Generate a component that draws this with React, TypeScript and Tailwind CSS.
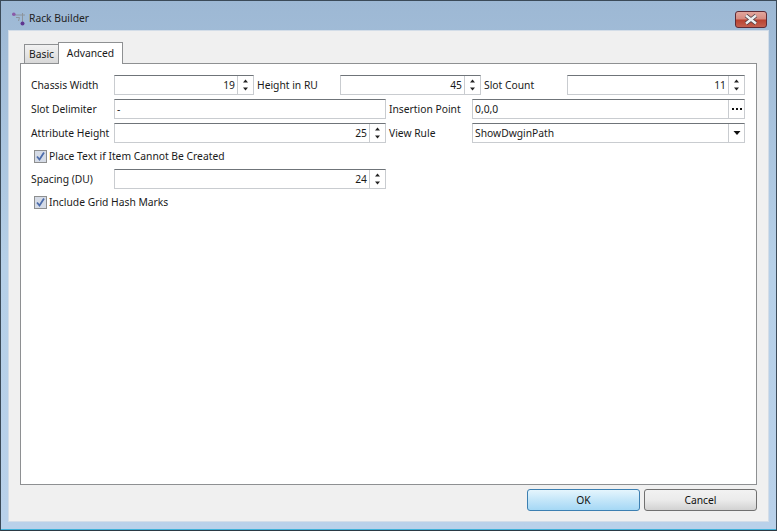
const fieldBorder = 'border border-[#c9ccd0] border-t-[#6f7479] bg-white'

function SpinArrows() {
  return (
    <svg width="7" height="12" viewBox="0 0 7 12">
      <path d="M3.5 0.5L6 3.5H1Z" fill="#222" />
      <path d="M1 8.5H6L3.5 11.5Z" fill="#222" />
    </svg>
  )
}

function Label({ text, className }: { text: string; className: string }) {
  return <div className={`shrink-0 whitespace-nowrap ${className}`}>{text}</div>
}

function Spinner({ value, className }: { value: string; className: string }) {
  return (
    <div className={`flex h-5 items-center ${fieldBorder} ${className}`}>
      <div className="flex-1 pr-[2px] text-right">{value}</div>
      <div className="flex h-full w-4 items-center justify-center border-l border-[#c9ccd0]">
        <SpinArrows />
      </div>
    </div>
  )
}

function TextField({ value }: { value: string }) {
  return <div className={`flex h-5 w-[272px] items-center pl-[2px] ${fieldBorder}`}>{value}</div>
}

function Check({ text }: { text: string }) {
  return (
    <div className="flex h-[14px] items-center gap-[2px] pl-[3px]">
      <div className="flex h-[13px] w-[13px] items-center justify-center border border-[#8e8f8f] bg-[#d5dbe6]">
        <svg width="11" height="11" viewBox="0 0 11 11">
          <path d="M2 5.5L4.5 8.5L9 1.5" fill="none" stroke="#4c6cab" strokeWidth="1.8" />
        </svg>
      </div>
      <span>{text}</span>
    </div>
  )
}

function RackIcon() {
  return (
    <svg width="14" height="14" viewBox="0 0 14 14" className="shrink-0">
      <path d="M2 3H13M10.5 1V12M4 5.5H7.5L6.5 9" fill="none" stroke="#8c949c" strokeWidth="1" />
      <circle cx="1.8" cy="2.2" r="1.8" fill="#8a5aa8" />
      <circle cx="10.5" cy="11.5" r="2" fill="#5f3590" />
    </svg>
  )
}

export default function App() {
  return (
    <div className="flex h-[531px] w-[777px] flex-col overflow-hidden border border-[#3b4a58] border-b-[#2b3a45] bg-gradient-to-b from-[#9db8d4] via-[#b6d0e8] to-[#b9d1ea] font-['Noto_Sans',sans-serif] text-[10.3px] leading-none text-[#1a1a1a]">
      <div className="flex h-[29px] shrink-0 items-center gap-[3px] pl-[11px] pr-[9px] pt-[6px]">
        <RackIcon />
        <span className="flex-1 text-[#222]">Rack Builder</span>
        <div className="mt-[2px] flex h-[17px] w-[32px] items-center justify-center rounded-[3px] border border-[#5e2a35] bg-[linear-gradient(to_bottom,#e2a69d_0%,#d58a7f_48%,#b8402e_52%,#c4604f_100%)]">
          <svg width="16" height="11" viewBox="0 0 16 11">
            <path d="M3 1.5L13 9.5M13 1.5L3 9.5" stroke="#4a3a40" strokeWidth="4" />
            <path d="M3 1.5L13 9.5M13 1.5L3 9.5" stroke="#eef0f2" strokeWidth="2.4" />
          </svg>
        </div>
      </div>

      <div className="mx-[7px] flex h-[492px] shrink-0 flex-col border border-[#d3dde8] bg-[#f0f0f0] px-[11px] pt-[10px]">
        <div className="flex h-[22px] items-end pl-[4px]">
          <div className="flex h-[19px] w-[35px] items-center justify-center border border-b-0 border-[#8e9092] bg-gradient-to-b from-[#f2f2f2] to-[#d8d8d8]">
            Basic
          </div>
          <div className="-mb-px relative z-10 flex h-[22px] w-[65px] items-center justify-center border border-b-0 border-[#8e9092] bg-white -ml-px">
            Advanced
          </div>
        </div>
        <div className="flex h-[422px] flex-col border border-[#8e9092] bg-white pl-[10px] pt-[11px]">
          <div className="flex items-center">
            <Label text="Chassis Width" className="w-[83px]" />
            <Spinner value="19" className="w-[140px]" />
            <Label text="Height in RU" className="w-[86px] pl-[3px]" />
            <Spinner value="45" className="w-[141px]" />
            <Label text="Slot Count" className="w-[86px] pl-[3px]" />
            <Spinner value="11" className="w-[178px]" />
          </div>
          <div className="mt-1 flex items-center">
            <Label text="Slot Delimiter" className="w-[83px]" />
            <TextField value="-" />
            <Label text="Insertion Point" className="w-[86px] pl-[3px]" />
            <div className={`flex h-5 w-[273px] items-center ${fieldBorder}`}>
              <div className="flex-1 pl-[2px]">0,0,0</div>
              <div className="flex h-full w-4 items-center justify-center gap-[2px] border-l border-[#c9ccd0] pb-px">
                <span className="h-[2px] w-[2px] bg-[#111]" />
                <span className="h-[2px] w-[2px] bg-[#111]" />
                <span className="h-[2px] w-[2px] bg-[#111]" />
              </div>
            </div>
          </div>
          <div className="mt-1 flex items-center">
            <Label text="Attribute Height" className="w-[83px]" />
            <Spinner value="25" className="w-[272px]" />
            <Label text="View Rule" className="w-[86px] pl-[3px]" />
            <div className={`flex h-5 w-[273px] items-center ${fieldBorder}`}>
              <div className="flex-1 pl-[2px]">ShowDwginPath</div>
              <div className="flex h-full w-4 items-center justify-center border-l border-[#c9ccd0]">
                <svg width="8" height="4" viewBox="0 0 8 4">
                  <path d="M0.5 0H7.5L4 4Z" fill="#111" />
                </svg>
              </div>
            </div>
          </div>
          <div className="mt-[6px]">
            <Check text="Place Text if Item Cannot Be Created" />
          </div>
          <div className="mt-[6px] flex items-center">
            <Label text="Spacing (DU)" className="w-[83px]" />
            <Spinner value="24" className="w-[272px]" />
          </div>
          <div className="mt-[6px]">
            <Check text="Include Grid Hash Marks" />
          </div>
        </div>
        <div className="flex justify-end gap-1 pt-[4px]">
          <button className="h-[22px] w-[113px] rounded-[3px] border border-[#3c7fb1] bg-gradient-to-b from-[#e5f5fd] via-[#c4e6f9] to-[#a5d8f5] text-[#111]">
            OK
          </button>
          <button className="h-[22px] w-[113px] rounded-[3px] border border-[#707070] bg-gradient-to-b from-[#f2f2f2] via-[#ebebeb] to-[#d2d2d2] text-[#111]">
            Cancel
          </button>
        </div>
      </div>
      <div className="mt-auto h-px bg-[#3fb0d8]" />
    </div>
  )
}
